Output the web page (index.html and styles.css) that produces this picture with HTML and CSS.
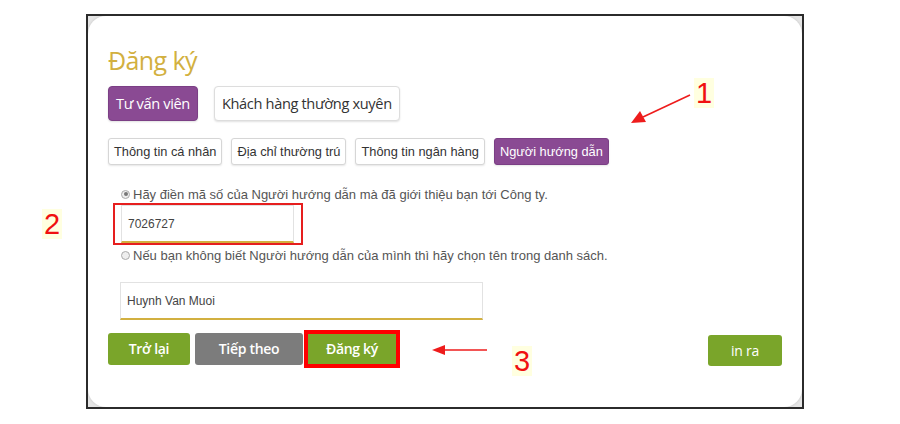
FILE: index.html
```html
<!DOCTYPE html>
<html lang="vi">
<head>
	<meta charset="UTF-8">
	<meta name="viewport" content="width=device-width, initial-scale=1.0">
	<title>Đăng ký</title>
	<link rel="stylesheet" href="styles.css">
</head>
<body>
	<div class="page">
		<div class="frame">
			<div class="card">
				<h1 class="title">Đăng ký</h1>
				<ul class="list-type">
					<li class="item-type selected">Tư vấn viên</li>
					<li class="item-type">Khách hàng thường xuyên</li>
				</ul>
				<ul class="list-step">
					<li class="item-step">Thông tin cá nhân</li>
					<li class="item-step">Địa chỉ thường trú</li>
					<li class="item-step">Thông tin ngân hàng</li>
					<li class="item-step selected">Người hướng dẫn</li>
				</ul>
				<div class="form-box">
					<label class="radio-row"><span class="radio checked"></span>Hãy điền mã số của Người hướng dẫn mà đã giới thiệu bạn tới Công ty.</label>
					<div class="field field-code">7026727</div>
					<label class="radio-row"><span class="radio"></span>Nếu bạn không biết Người hướng dẫn của mình thì hãy chọn tên trong danh sách.</label>
					<div class="field field-name">Huynh Van Muoi</div>
				</div>
				<div class="btn-row">
					<a href="#" class="btn btn-back">Trở lại</a>
					<a href="#" class="btn btn-next">Tiếp theo</a>
					<a href="#" class="btn btn-submit">Đăng ký</a>
					<a href="#" class="btn btn-print">in ra</a>
				</div>
			</div>
		</div>

		<!-- chú thích -->
		<div class="mark-box"></div>
		<span class="num num-1">1</span>
		<span class="num num-2">2</span>
		<span class="num num-3">3</span>
		<svg class="arrows" width="900" height="424" viewBox="0 0 900 424">
			<line x1="690" y1="95" x2="643" y2="117" stroke="#ee1c1c" stroke-width="1.6"/>
			<polygon points="631,123 640,111 646,122" fill="#ee1c1c"/>
			<line x1="487" y1="350" x2="444" y2="350" stroke="#ee1c1c" stroke-width="1.6"/>
			<polygon points="432,350 445,345 445,355" fill="#ee1c1c"/>
		</svg>
	</div>
</body>
</html>
```

FILE: styles.css
```css
*{ box-sizing: border-box; }
body{ margin: 0; background: #fff; font-family: "Liberation Sans", Arial, sans-serif; }
.page{ position: relative; width: 900px; height: 424px; padding: 14px 0 0 86px; }

.frame{
	width: 718px; height: 395px;
	border: 2px solid #2b2b2b; background: #e6e6e6; overflow: hidden;
}
.card{
	height: 100%; background: #fff; border-radius: 18px;
	box-shadow: 0 0 3px rgba(0,0,0,.15);
	padding: 28px 20px 0 20px;
}
.title{
	margin: 0 0 10px; font-family: "Open Sans", sans-serif; font-weight: 400;
	font-size: 25px; line-height: 32px; color: #d2b040; letter-spacing: -0.6px;
}

.list-type, .list-step{ list-style: none; margin: 0; padding: 0; display: flex; }
.list-type{ gap: 16px; margin-bottom: 17px; }
.item-type{
	height: 35px; line-height: 33px; padding: 0 7px; border: 1px solid #ddd; border-radius: 4px;
	font-family: "Open Sans", sans-serif; font-size: 14.6px; letter-spacing: -0.35px; color: #333;
	background: #fff; box-shadow: 0 1px 2px rgba(0,0,0,.12);
}
.item-type.selected{ background: #8a4a93; border-color: #7b3f85; color: #fff; }

.list-step{ gap: 9px; margin-bottom: 21px; }
.item-step{
	height: 27px; line-height: 25px; padding: 0 5px; border: 1px solid #d6d6d6; border-radius: 3px;
	font-size: 12.8px; color: #333; background: #fff; box-shadow: 0 1px 2px rgba(0,0,0,.1);
}
.item-step.selected{ background: #8a4a93; border-color: #7b3f85; color: #fff; }

.form-box{ padding-left: 13px; }
.radio-row{ display: flex; align-items: center; height: 16px; font-size: 13px; color: #555; }
.radio{
	width: 9px; height: 9px; border-radius: 50%; border: 1px solid #aaa; background: #eee;
	margin-right: 3px; position: relative; flex: none;
}
.radio.checked::after{
	content: ''; position: absolute; left: 1.5px; top: 1.5px; width: 4px; height: 4px;
	border-radius: 50%; background: #777;
}
.field{
	height: 38px; line-height: 36px; padding: 0 6px; border: 1px solid #e2e2e2;
	border-bottom: 2px solid #d2b040; font-size: 12px; color: #444; background: #fff;
}
.field-code{ width: 173px; margin: 3px 0 4px; }
.field-name{ width: 363px; margin: 19px 0 12px -1px; }

.btn-row{ display: flex; align-items: center; gap: 5px; }
.btn{
	display: block; height: 32px; line-height: 32px; border-radius: 3px; text-align: center;
	font-family: "Open Sans", sans-serif; font-size: 14px; font-weight: 600; letter-spacing: -0.3px;
	color: #fff; text-decoration: none; background: #7aa52a;
}
.btn-back{ width: 82px; }
.btn-next{ width: 108px; background: #7c7c7c; }
.btn-submit{ width: 88px; height: 30px; line-height: 30px; border-radius: 0; outline: 4px solid #f00; }
.btn-print{ width: 74px; margin: 3px 0 0 auto; height: 31px; line-height: 31px; font-weight: 400; }

.mark-box{
	position: absolute; left: 113px; top: 203px; width: 190px; height: 42px;
	border: 2px solid #e61e1e;
}
.num{
	position: absolute; background: #ffffe0; color: #f01010;
	font-size: 29px; line-height: 30px; padding: 0 2px;
}
.num-1{ left: 694px; top: 78px; }
.num-2{ left: 42px; top: 209px; }
.num-3{ left: 512px; top: 346px; }
.arrows{ position: absolute; left: 0; top: 0; pointer-events: none; }
```
